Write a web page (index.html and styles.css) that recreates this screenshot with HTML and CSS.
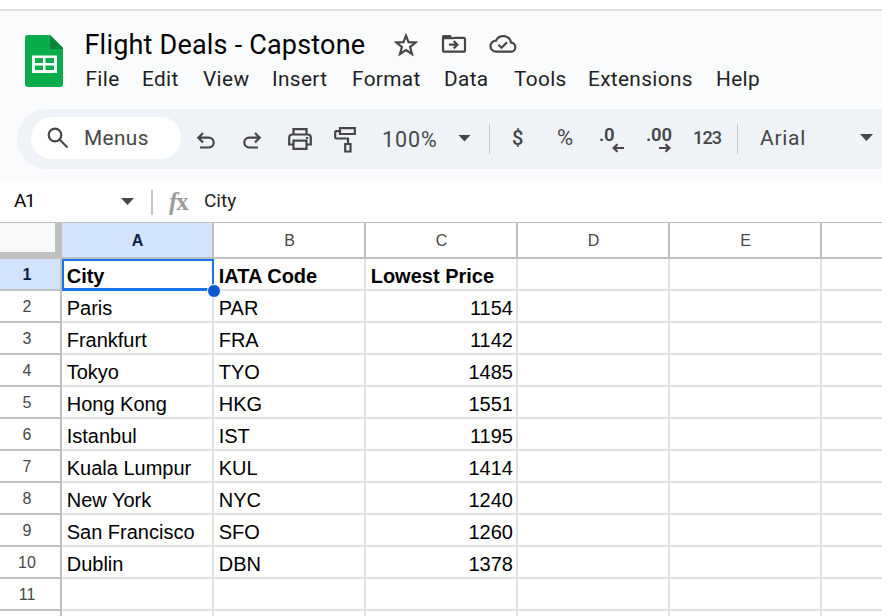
FILE: index.html
```html
<!DOCTYPE html>
<html lang="en">
<head>
<meta charset="utf-8">
<title>Flight Deals - Capstone</title>
<link rel="stylesheet" href="styles.css">
</head>
<body>
<header class="app-header">
  <div class="brand">
    <svg class="logo" width="38" height="52" viewBox="0 0 38 52"><path d="M3 0H25L38 13V49a3 3 0 0 1-3 3H3a3 3 0 0 1-3-3V3a3 3 0 0 1 3-3z" fill="#0aad4b"/><path d="M25 0L38 13V14H25z" fill="#078638"/><path d="M7 20.500h25v17.500H7zM10 23v5H18v-5zM20.500 23v5h8.500v-5zM10 30.500v4.500H18v-4.500zM20.500 30.500v4.500h8.500v-4.500z" fill="#fff" fill-rule="evenodd"/></svg>
    <div class="brand-text">
      <div class="title-row">
        <h1 class="title">Flight Deals - Capstone</h1>
        <svg class="icon star" width="24" height="24" viewBox="0 0 24 24"><path d="M12 2.600L14.500 9.100L21.700 9.500L16.100 14L18 21L12 17.100L6 21L7.900 14L2.300 9.500L9.500 9.100Z"/></svg>
        <svg class="icon move" width="26" height="20" viewBox="0 0 26 20"><path d="M2 4V16.200a1.500 1.500 0 0 0 1.500 1.500H22.500a1.500 1.500 0 0 0 1.500-1.500V5.300a1.500 1.500 0 0 0-1.500-1.500H12"/><path class="solid" d="M1 5V2.500A1.700 1.700 0 0 1 2.700 1H9.500L13 5.200H1z"/><path d="M8 10.700h8M12.700 7l3.700 3.700-3.700 3.700"/></svg>
        <svg class="icon cloud" width="28" height="20" viewBox="0 0 28 20"><path d="M7 17.700H21.500a4.500 4.500 0 0 0 .6-9A8 8 0 0 0 7 6.700A5.500 5.500 0 0 0 7 17.700z"/><path d="M9.500 10.800l3 3 5.500-5.500"/></svg>
      </div>
      <nav class="menu"><a>File</a><a>Edit</a><a>View</a><a>Insert</a><a>Format</a><a>Data</a><a>Tools</a><a>Extensions</a><a>Help</a></nav>
    </div>
  </div>
  <div class="toolbar">
    <div class="search"><svg class="icon" width="22" height="22" viewBox="0 0 22 22"><circle cx="8" cy="8" r="6.300"/><path d="M12.500 12.500L20.500 20.500"/></svg><span class="menus">Menus</span></div>
    <svg class="icon undo" width="20" height="18" viewBox="0 0 20 18"><path d="M7 1L2.300 5.700L7 10.400M2.300 5.700H12.800a4.900 4.900 0 0 1 0 9.800H4"/></svg>
    <svg class="icon redo" width="20" height="18" viewBox="0 0 20 18"><path d="M13 1L17.700 5.700L13 10.400M17.700 5.700H7.200a4.900 4.900 0 0 0 0 9.800H16"/></svg>
    <svg class="icon print" width="24" height="22" viewBox="0 0 24 22"><path d="M5.500 6V1.200H18.500V6M5.500 16.500H1.200V9.500A3 3 0 0 1 4.200 6.500H19.800A3 3 0 0 1 22.800 9.500V16.500H18.500M5.500 12.700H18.500V20.800H5.500z"/><path class="solid" d="M18 9h2.200v2H18z"/></svg>
    <svg class="icon paint" width="22" height="26" viewBox="0 0 22 26"><path d="M6 1.200H20.800V7H6zM6 4.100H2.200a1 1 0 0 0-1 1V10.500a1 1 0 0 0 1 1H14V17M11.200 17H16.500V24.500H11.200z"/></svg>
    <span class="zoom">100%</span>
    <i class="caret caret-zoom"></i>
    <i class="sep sep-a"></i>
    <span class="currency">$</span>
    <span class="percent">%</span>
    <span class="decimal dec-less">.0<svg class="icon" width="12" height="10" viewBox="0 0 12 10"><path d="M12 5H2M5.500 1.200L1.600 5L5.500 8.800"/></svg></span>
    <span class="decimal dec-more">.00<svg class="icon" width="12" height="10" viewBox="0 0 12 10"><path d="M0 5H10M6.500 1.200L10.400 5L6.500 8.800"/></svg></span>
    <span class="number">123</span>
    <i class="sep sep-b"></i>
    <span class="font">Arial</span>
    <i class="caret caret-font"></i>
  </div>
</header>
<section class="formula-bar">
  <span class="cell-name">A1</span><i class="caret caret-name"></i><i class="divider"></i><span class="fx"><em>f</em>x</span><span class="formula">City</span>
</section>
<main class="sheet">
  <div class="row heads"><div class="corner"></div><div class="col active">A</div><div class="col">B</div><div class="col">C</div><div class="col">D</div><div class="col">E</div><div class="col"></div></div>
  <div class="row bold"><div class="num active">1</div><div class="cell selected">City<i class="handle"></i></div><div class="cell">IATA Code</div><div class="cell">Lowest Price</div><div class="cell"></div><div class="cell"></div><div class="cell"></div></div>
  <div class="row"><div class="num">2</div><div class="cell">Paris</div><div class="cell">PAR</div><div class="cell price">1154</div><div class="cell"></div><div class="cell"></div><div class="cell"></div></div>
  <div class="row"><div class="num">3</div><div class="cell">Frankfurt</div><div class="cell">FRA</div><div class="cell price">1142</div><div class="cell"></div><div class="cell"></div><div class="cell"></div></div>
  <div class="row"><div class="num">4</div><div class="cell">Tokyo</div><div class="cell">TYO</div><div class="cell price">1485</div><div class="cell"></div><div class="cell"></div><div class="cell"></div></div>
  <div class="row"><div class="num">5</div><div class="cell">Hong Kong</div><div class="cell">HKG</div><div class="cell price">1551</div><div class="cell"></div><div class="cell"></div><div class="cell"></div></div>
  <div class="row"><div class="num">6</div><div class="cell">Istanbul</div><div class="cell">IST</div><div class="cell price">1195</div><div class="cell"></div><div class="cell"></div><div class="cell"></div></div>
  <div class="row"><div class="num">7</div><div class="cell">Kuala Lumpur</div><div class="cell">KUL</div><div class="cell price">1414</div><div class="cell"></div><div class="cell"></div><div class="cell"></div></div>
  <div class="row"><div class="num">8</div><div class="cell">New York</div><div class="cell">NYC</div><div class="cell price">1240</div><div class="cell"></div><div class="cell"></div><div class="cell"></div></div>
  <div class="row"><div class="num">9</div><div class="cell">San Francisco</div><div class="cell">SFO</div><div class="cell price">1260</div><div class="cell"></div><div class="cell"></div><div class="cell"></div></div>
  <div class="row"><div class="num">10</div><div class="cell">Dublin</div><div class="cell">DBN</div><div class="cell price">1378</div><div class="cell"></div><div class="cell"></div><div class="cell"></div></div>
  <div class="row"><div class="num">11</div><div class="cell"></div><div class="cell"></div><div class="cell"></div><div class="cell"></div><div class="cell"></div><div class="cell"></div></div>
  <div class="row last"><div class="num"></div><div class="cell"></div><div class="cell"></div><div class="cell"></div><div class="cell"></div><div class="cell"></div><div class="cell"></div></div>
</main>
</body>
</html>
```
FILE: styles.css
```css
* { box-sizing: border-box; }
body { margin: 0; width: 882px; height: 616px; overflow: hidden; background: #fff; font-family: Roboto, "Liberation Sans", sans-serif; color: #1f1f1f; }
svg, i, span { flex: none; }
.icon { fill: none; stroke: #444746; stroke-width: 2.2; }
.solid { fill: #444746; stroke: none; }
.app-header { margin-top: 9px; height: 172px; border-top: 2px solid #e1e1e1; background: #f9fbfd; }
.brand { display: flex; height: 98px; padding-left: 25px; }
.logo { margin-top: 24px; }
.brand-text { margin-left: 21.500px; }
.title-row { display: flex; align-items: center; height: 48px; padding-top: 20px; }
.title { margin: 0; width: 309px; font-size: 27px; font-weight: 400; line-height: 32px; letter-spacing: .2px; white-space: nowrap; color: #000; }
.star { margin-top: -1px; }
.move { margin: -2px 0 0 23.500px; }
.cloud { margin: -2px 0 0 21.500px; }
.menu { display: grid; grid-template-columns: 56.500px 61px 69px 80px 92px 70px 74px 128px 50px; margin-top: 7px; padding-left: 1px; font-size: 20.800px; line-height: 26px; letter-spacing: .35px; }
.toolbar { display: flex; align-items: center; height: 60px; margin-left: 17px; padding-left: 14px; border-radius: 30px 0 0 30px; background: #eff3f8; color: #444746; }
.search { display: flex; align-items: center; width: 150px; height: 42px; margin-top: -3px; padding-left: 16px; border-radius: 21px; background: #fff; }
.menus { margin-left: 15px; font-size: 20.800px; letter-spacing: .4px; }
.undo { margin: 3px 0 0 14.500px; }
.redo { margin: 3px 0 0 26.500px; }
.print { margin-left: 25.500px; }
.paint { margin: 1px 0 0 22px; }
.zoom { width: 58px; margin: 1px 0 0 26.500px; font-size: 21.500px; letter-spacing: .9px; }
.caret { width: 13px; height: 7px; background: #444746; clip-path: polygon(0 0, 100% 0, 50% 100%); }
.caret-zoom { margin-left: 18px; margin-top: -2px; }
.sep { width: 1px; height: 30px; background: #c7c7c7; }
.sep-a { margin-left: 18px; }
.currency { width: 14px; margin: -3px 0 0 22px; font-size: 20px; font-weight: 500; }
.percent { width: 20px; margin: -3px 0 0 31px; font-size: 22px; }
.decimal { display: flex; flex-direction: column; width: 25px; margin-top: -1px; font-size: 18.500px; letter-spacing: -.2px; font-weight: 600; line-height: 20px; }
.decimal svg { align-self: flex-end; margin-top: -2px; }
.dec-less { margin-left: 22px; }
.dec-more { margin-left: 22px; }
.number { width: 28px; margin: -3px 0 0 22px; font-size: 18px; letter-spacing: -.8px; font-weight: 500; }
.sep-b { margin-left: 15.500px; }
.font { width: 46px; margin: -3px 0 0 22.500px; font-size: 21px; letter-spacing: .7px; }
.caret-font { margin-left: 54px; margin-top: -3px; }
.formula-bar { display: flex; align-items: center; height: 42px; border-bottom: 1px solid #c0c0c0; padding-left: 14px; font-size: 19px; }
.cell-name { width: 22px; margin-top: -2px; letter-spacing: -1.300px; color: #000; }
.caret-name { margin-left: 85px; }
.divider { width: 2px; height: 25px; margin: 2px 0 0 17px; background: #c7c7c7; }
.fx { width: 22px; margin-left: 16px; font-family: "Liberation Serif", serif; font-weight: 700; font-size: 25px; color: #9a9c9b; }
.fx em { letter-spacing: -1px; }
.formula { margin: -2px 0 0 13px; }
.row { display: grid; grid-template: 100% / 62px repeat(5, 152px) 1fr; height: 32px; font-family: "Liberation Sans", Arial, sans-serif; }
.heads { height: 36px; }
.corner { background: #f8f9fa; border: solid #c0c0c0; border-width: 0 7px 7px 0; }
.col, .num { display: flex; align-items: center; justify-content: center; border: solid #c0c0c0; border-width: 0 2px 2px 0; font-size: 16px; color: #444746; }
.col { padding: 2px 0 0 1px; }
.num { padding: 1px 6px 0 0; }
.active { background: #d3e3fd; color: #041e49; font-weight: 700; }
.cell { position: relative; border: solid #e1e1e1; border-width: 0 2px 2px 0; padding: 3px 3px 0 4.700px; font-size: 20px; line-height: 29px; white-space: nowrap; color: #000; }
.row > :last-child { border-right: 0; }
.last { height: 5px; overflow: hidden; }
.last > * { padding: 0; border-bottom: 0; }
.bold .cell { font-weight: 700; }
.cell.price { text-align: right; }
.bold .selected { border: 2px solid #1a73e8; border-bottom-width: 3px; padding: 1px 0 0 2.700px; }
.handle { position: absolute; z-index: 1; right: -9px; bottom: -10px; width: 14px; height: 14px; border: 1px solid #fff; border-radius: 50%; background: #0b57d0; }
```
